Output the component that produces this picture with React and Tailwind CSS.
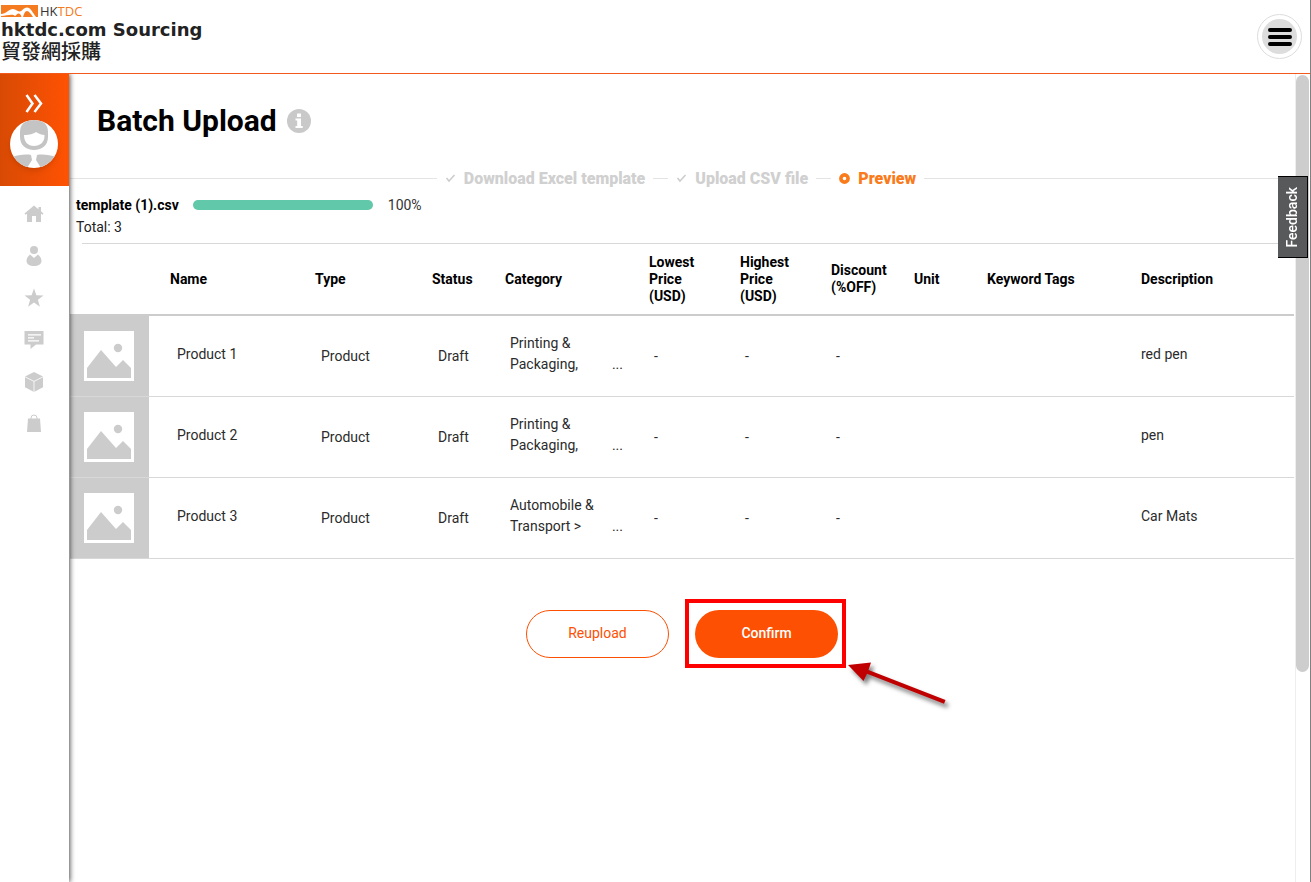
const STEPS = [
  { label: "Download Excel template", done: true },
  { label: "Upload CSV file", done: true },
  { label: "Preview", done: false },
];

const COLUMNS = [
  { label: "Name", width: "w-[145px]" },
  { label: "Type", width: "w-[117px]" },
  { label: "Status", width: "w-[73px]" },
  { label: "Category", width: "w-[144px]" },
  { label: "Lowest Price (USD)", width: "w-[91px]" },
  { label: "Highest Price (USD)", width: "w-[91px]" },
  { label: "Discount (%OFF)", width: "w-[83px]" },
  { label: "Unit", width: "w-[73px]" },
  { label: "Keyword Tags", width: "w-[154px]" },
  { label: "Description", width: "" },
];

const PRODUCTS = [
  { name: "Product 1", category: "Printing & Packaging,", description: "red pen" },
  { name: "Product 2", category: "Printing & Packaging,", description: "pen" },
  { name: "Product 3", category: "Automobile & Transport >", description: "Car Mats" },
];

const NAV = [
  {
    label: "Home",
    icon: (
      <path d="M10 1.5 0.5 9.5l1 1.2L3 9.8V18h5v-6h4v6h5V9.8l1.5 .9 1-1.2L17 7.2V3h-2.500v2.200Z" />
    ),
  },
  {
    label: "Profile",
    icon: (
      <>
        <circle cx="10" cy="4" r="4" />
        <path d="M6 8.500 10 12l4-3.500c2.200 1.800 3.500 4 3.500 6.500 0 3-3.200 5-7.500 5s-7.500-2-7.500-5c0-2.500 1.300-4.700 3.500-6.500Z" />
      </>
    ),
  },
  {
    label: "Favourites",
    icon: <path d="m10 .5 2.400 6.700 7.100.2-5.600 4.400 2 6.900L10 14.600l-5.900 4.100 2-6.900L.5 7.400l7.100-.2Z" />,
  },
  {
    label: "Messages",
    icon: (
      <>
        <path d="M.5 1h19v13.500H12L6.500 19v-4.500h-6Z" />
        <path d="M4 4.800h13M4 7.800h6M4 10.800h11" stroke="#fff" strokeWidth="1.2" />
      </>
    ),
  },
  {
    label: "Products",
    icon: (
      <>
        <path d="m10 0 9 4.600v10.600L10 20l-9-4.800V4.600Z" />
        <path d="m1 4.800 9 4.600 9-4.600M10 9.400V20" fill="none" stroke="#fff" strokeWidth=".8" />
      </>
    ),
  },
  {
    label: "Orders",
    icon: (
      <>
        <path d="M4 4.500h12L17 18H3Z" />
        <path d="M7 5.500V4a3 3 0 0 1 6 0v1.500" fill="none" stroke="#ccc" />
      </>
    ),
  },
];

function Logo() {
  return (
    <a href="#" className="flex flex-col whitespace-nowrap text-[#222]">
      <span className="flex h-3 items-center gap-[2px]">
        <svg width="37" height="12" viewBox="0 0 37 12" aria-hidden="true">
          <path d="M0 0h37v12H0Z" fill="#f47b20" />
          <path
            d="M0 9C5 9 8 4 12 4c3 0 4 2.500 6.500 2.500S22.500 2.500 26 2.500c3.500 0 5.500 5 9 9.500h-3C30 9 28 6 26 6c-2 0-3 3-4 6h-1.500c-.5-2-1.500-3.500-3-3.500S15.500 10 14 11C12 8.500 6 10.500 0 11Z"
            fill="#fff"
          />
        </svg>
        <span className="font-['Open_Sans',sans-serif] text-[13px] leading-3 text-[#333]">
          HK<span className="text-[#f47b20]">TDC</span>
        </span>
      </span>
      <span className="font-['DejaVu_Sans',sans-serif] text-[18px] leading-[26px] font-bold">hktdc.com Sourcing</span>
      <span className="font-['Liberation_Sans','Noto_Sans_CJK_TC',sans-serif] text-[20px] leading-[18px] font-medium">
        貿發網採購
      </span>
    </a>
  );
}

function Sidebar() {
  return (
    <aside className="relative z-10 w-[69px] shrink-0 bg-white shadow-[1px_0_5px_rgba(0,0,0,0.7)]">
      <div className="flex h-28 flex-col items-center gap-[7px] bg-linear-to-r from-[#d84a04] to-[#ff5203] pt-5">
        <button type="button" aria-label="Expand menu" className="mr-px">
          <svg width="18" height="19" viewBox="0 0 18 19" fill="none" stroke="#fff" strokeWidth="2.500">
            <path d="m1.500 1 6 8.500-6 8.500M9.500 1l6.500 8.500L9.500 18" />
          </svg>
        </button>
        <svg width="48" height="48" viewBox="0 0 48 48" className="mr-px rounded-full shadow-md" aria-hidden="true">
          <path d="M0 0h48v48H0Z" fill="#fff" />
          <path d="M10 12C10 4 15 0 24 0s14 4 14 12v5c0 8-6 13-14 13s-14-5-14-13Z" fill="#c4c4c4" />
          <path d="M14 15c6 0 9-1 12-3 3 2 6 3 8.500 3C35 22 30 26 24 26s-10-4-10-11Z" fill="#fff" />
          <path d="M2 37c5-2 14-3 19-2l1 5-5 8H0ZM46 37c-5-2-14-3-19-2l-1 5 5 8h17Z" fill="#c4c4c4" />
        </svg>
      </div>
      <nav className="flex flex-col items-center gap-[22px] pt-[18px]">
        {NAV.map((item) => (
          <a key={item.label} href="#" aria-label={item.label} className="mr-px">
            <svg width="20" height="20" viewBox="0 0 20 20" fill="#ccc">
              {item.icon}
            </svg>
          </a>
        ))}
      </nav>
    </aside>
  );
}

function Steps() {
  return (
    <ol className="flex items-center gap-2 pr-[3px] text-[16px] leading-[21px] font-black whitespace-nowrap">
      <li className="h-px flex-1 bg-[#e4e4e4]" />
      {STEPS.map((step, index) => (
        <li
          key={step.label}
          className={step.done ? "flex items-center gap-2 text-[#d0d0d0]" : "flex items-center gap-2 text-[#fa7b1b]"}
        >
          {index > 0 && <span className="h-px w-[15px] bg-[#e4e4e4]" />}
          {step.done ? (
            <svg width="11" height="12" viewBox="0 0 11 12" fill="none" stroke="#ccc" strokeWidth="1.500">
              <path d="m1.500 5 2.500 3L9.500 2" />
            </svg>
          ) : (
            <svg width="11" height="11" viewBox="0 0 11 11" fill="none" stroke="currentColor" strokeWidth="3.600">
              <circle cx="5.500" cy="5.500" r="3.600" />
            </svg>
          )}
          {step.label}
        </li>
      ))}
      <li className="h-px flex-1 bg-[#e4e4e4]" />
    </ol>
  );
}

function Thumbnail() {
  return (
    <svg width="50" height="50" viewBox="0 0 50 50" className="ml-[14px]" aria-hidden="true">
      <path d="M0 0h50v50H0Z" fill="#fff" />
      <path d="M3 37 17 19l15 17 7-7 8 8v10H3Z" fill="#ccc" />
      <circle cx="34" cy="17" r="4.200" fill="#ccc" />
    </svg>
  );
}

function ProductTable() {
  return (
    <table className="w-full table-fixed border-collapse text-left text-[14px] text-[#2b2b2b]">
      <thead>
        <tr className="h-[71px] border-b-2 border-[#ccc] leading-[17px] text-black">
          <th className="w-[79px]" aria-label="Image" />
          {COLUMNS.map((column) => (
            <th key={column.label} className={`${column.width} pl-[21px] font-bold`}>
              {column.label}
            </th>
          ))}
        </tr>
      </thead>
      <tbody>
        {PRODUCTS.map((product) => (
          <tr key={product.name} className="h-[81px] border-b border-[#d8d8d8] leading-[21px]">
            <td className="bg-[#ccc]">
              <Thumbnail />
            </td>
            <td className="pb-[2px] pl-7">{product.name}</td>
            <td className="pt-[2px] pl-[27px]">Product</td>
            <td className="pt-[2px] pl-[27px]">Draft</td>
            <td className="pb-1 pl-[26px]">
              <div className="flex items-end justify-between pr-[5px]">
                <span className="w-[88px]">{product.category}</span>
                <span>...</span>
              </div>
            </td>
            <td className="pt-[2px] pl-[26px]">-</td>
            <td className="pt-[2px] pl-[26px]">-</td>
            <td className="pt-[2px] pl-[26px]">-</td>
            <td />
            <td />
            <td className="pb-[2px] pl-[21px]">{product.description}</td>
          </tr>
        ))}
      </tbody>
    </table>
  );
}

function Actions() {
  return (
    <div className="mt-[51px] flex justify-center gap-[26px] text-[14px]">
      <button type="button" className="h-12 w-[143px] rounded-full border border-[#fd5003] pb-px text-[#fd5003]">
        Reupload
      </button>
      <div className="relative">
        <button type="button" className="h-12 w-[143px] rounded-full bg-[#fd5003] pb-px font-medium text-white">
          Confirm
        </button>
        <div className="pointer-events-none absolute -top-[11px] -right-2 -bottom-[10px] -left-[10px] border-4 border-[#fe0000]" />
        <svg
          width="110"
          height="55"
          viewBox="0 0 110 55"
          className="pointer-events-none absolute top-[50px] left-[150px] drop-shadow-[3px_4px_2px_rgba(0,0,0,0.5)]"
          aria-hidden="true"
        >
          <path d="m3 5 23-2.500-2.500 7.500L100.500 40l-1.500 3.800L22 13.800l-3.500 7.200Z" fill="#c00000" />
        </svg>
      </div>
    </div>
  );
}

export default function App() {
  return (
    <div className="relative flex min-h-screen flex-col border-r border-[#808080] bg-white font-['Roboto',sans-serif]">
      <header className="relative z-20 flex h-[74px] items-start justify-between border-b border-b-[#f25a1d] bg-white pt-[5px] pr-2 pl-px">
        <Logo />
        <button
          type="button"
          aria-label="Menu"
          className="mt-[9px] flex size-[45px] items-center justify-center rounded-full border border-[#ddd]"
        >
          <span className="flex size-[35px] items-center justify-center rounded-full bg-[#ddd]">
            <svg width="24" height="20" viewBox="0 0 24 20" stroke="#000" strokeWidth="4" strokeLinecap="round">
              <path d="M2 3h20M2 10h20M2 17h20" />
            </svg>
          </span>
        </button>
      </header>

      <div className="flex flex-1">
        <Sidebar />
        <main className="min-w-0 flex-1 px-px">
          <div className="flex items-center gap-[10px] pt-[29px] pl-[27px]">
            <h1 className="text-[30px] leading-9 font-bold">Batch Upload</h1>
            <button type="button" aria-label="About batch upload">
              <svg width="24" height="24" viewBox="0 0 24 24" fill="#fff">
                <circle cx="12" cy="12" r="12" fill="#c9c9c9" />
                <path d="M10 4.500h4V8h-4ZM8.500 9.500H14v7.500h1.700v2H8.500v-2h1.700v-5.500H8.500Z" />
              </svg>
            </button>
          </div>

          <div className="mt-[29px]">
            <Steps />
          </div>

          <div className="mt-[5px] pl-[6px] text-[14px] leading-[22px]">
            <div className="flex items-center">
              <span className="font-bold">template (1).csv</span>
              <div className="mr-[15px] ml-[14px] h-[10px] w-[180px] rounded-full bg-[#62c8aa]" />
              <span className="text-[#333]">100%</span>
            </div>
            <p className="text-[#222]">Total: 3</p>
          </div>

          <div className="mt-[5px] ml-3 h-px bg-[#d8d8d8]" />
          <ProductTable />
          <Actions />
        </main>
        <div className="w-[15px] shrink-0 border-l border-[#eee] pt-px pr-px">
          <div className="h-[597px] rounded-full bg-[#cdcdcd]" />
        </div>
      </div>

      <button
        type="button"
        className="absolute top-44 right-[2px] z-20 flex h-[82px] w-[30px] items-center justify-center border border-l-0 border-black bg-[#58595b] text-white"
      >
        <span className="rotate-180 text-[14px] font-medium [writing-mode:vertical-rl]">Feedback</span>
      </button>
    </div>
  );
}
